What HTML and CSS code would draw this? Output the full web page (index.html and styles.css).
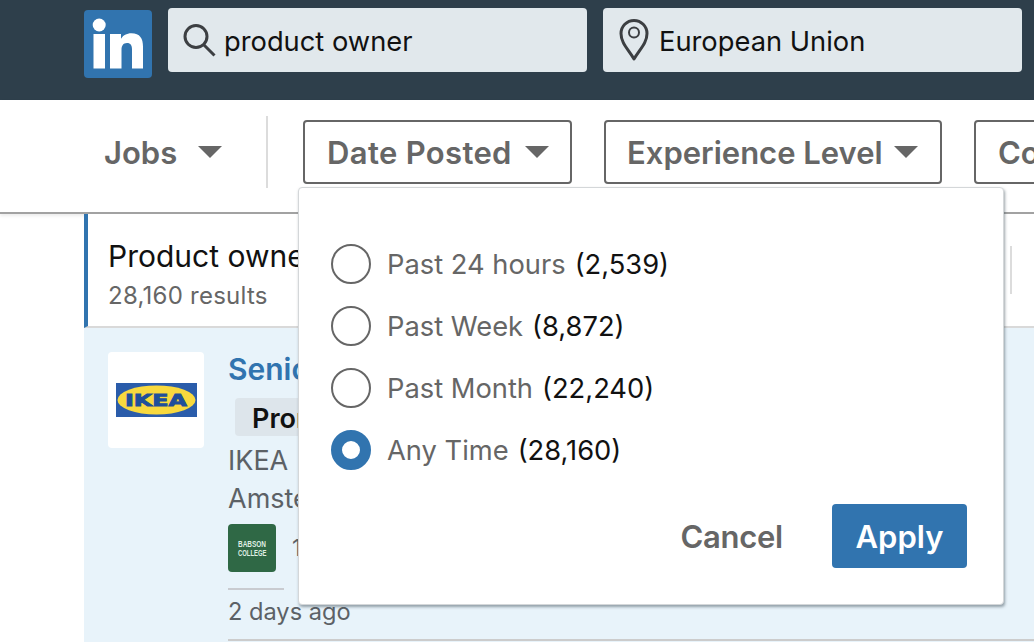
FILE: index.html
```html
<!DOCTYPE html>
<html lang="en">
<head>
<meta charset="utf-8">
<title>LinkedIn Jobs</title>
<link rel="stylesheet" href="styles.css">
</head>
<body>
<header class="topbar">
  <svg class="logo" width="68" height="68" viewBox="0 0 68 68" aria-label="LinkedIn"><rect width="68" height="68" rx="4" fill="#3174af"/><circle cx="15.200" cy="15" r="6.500" fill="#fff"/><rect x="9.500" y="24" width="11.500" height="34.500" fill="#fff"/><path d="M26 24h11v4.800c2-3.400 5.600-5.600 10.400-5.600C56 23.200 59 28.500 59 36.500V58.500H48V39.500c0-4-1.300-6.500-5-6.500-3.900 0-5.500 2.800-5.500 6.800V58.500H26z" fill="#fff"/></svg>
  <div class="field field-search">
    <svg class="field-icon" width="36" height="36" viewBox="0 0 36 36"><circle cx="15" cy="14.500" r="11" fill="none" stroke="#3c3f42" stroke-width="3"/><path d="M23 23l10.500 10.500" stroke="#3c3f42" stroke-width="3" fill="none"/></svg>
    <span class="field-text">product owner</span>
  </div>
  <div class="field field-place">
    <svg class="field-icon" width="30" height="44" viewBox="0 0 30 44"><path d="M15 41C9 31 2 25 2 15.500a13 13 0 0 1 26 0C28 25 21 31 15 41z" fill="none" stroke="#3c3f42" stroke-width="3" stroke-linejoin="round"/><circle cx="15" cy="14.500" r="5" fill="none" stroke="#3c3f42" stroke-width="2"/></svg>
    <span class="field-text">European Union</span>
  </div>
</header>
<nav class="filters">
  <div class="jobs">Jobs<span class="caret caret-jobs"></span></div>
  <div class="divider"></div>
  <div class="filter filter-date"><span class="label-date">Date Posted</span><span class="caret caret-date"></span></div>
  <div class="filter filter-exp">Experience Level<span class="caret caret-exp"></span></div>
  <div class="filter filter-co">Company<span class="caret"></span></div>
</nav>
<main class="content">
  <section class="results">
    <div class="results-head">
      <div class="results-text">
        <div class="results-title">Product owner in European Union</div>
        <div class="results-count">28,160 results</div>
      </div>
      <div class="head-divider"></div>
    </div>
    <article class="job">
      <div class="ikea-card">
        <svg width="81" height="34" viewBox="0 0 81 34" aria-label="IKEA"><rect width="81" height="34" fill="#2a5caa"/><ellipse cx="40.500" cy="17" rx="39" ry="14.500" fill="#f8d93e"/><text x="9" y="22.500" textLength="62" lengthAdjust="spacingAndGlyphs" class="ikea-text">IKEA</text></svg>
      </div>
      <div class="job-body">
        <div class="job-title">Senior Product Owner</div>
        <div class="job-tag">Promoted</div>
        <div class="job-line job-company">IKEA</div>
        <div class="job-line job-place">Amsterdam, NL</div>
        <div class="alumni">
          <svg class="babson" width="48" height="48" viewBox="0 0 48 48" aria-label="Babson College"><rect width="48" height="48" rx="4" fill="#2f6845"/><text x="10" y="23" textLength="28" lengthAdjust="spacingAndGlyphs" class="babson-text">BABSON</text><text x="10" y="32" textLength="28.500" lengthAdjust="spacingAndGlyphs" class="babson-text">COLLEGE</text></svg>
          <span class="alumni-text">1 alumni</span>
        </div>
        <div class="rule-short"></div>
        <div class="posted">2 days ago</div>
        <div class="rule-long"></div>
      </div>
    </article>
  </section>
  <div class="popover">
    <ul class="options">
      <li class="option"><span class="radio"></span><span class="opt-label">Past 24 hours</span><span class="opt-count">(2,539)</span></li>
      <li class="option"><span class="radio"></span><span class="opt-label">Past Week</span><span class="opt-count">(8,872)</span></li>
      <li class="option"><span class="radio"></span><span class="opt-label">Past Month</span><span class="opt-count">(22,240)</span></li>
      <li class="option"><span class="radio radio-on"></span><span class="opt-label">Any Time</span><span class="opt-count">(28,160)</span></li>
    </ul>
    <div class="actions">
      <button class="btn-cancel">Cancel</button>
      <button class="btn-apply">Apply</button>
    </div>
  </div>
</main>
</body>
</html>
```
FILE: styles.css
```css
* { box-sizing: border-box; }
html, body { margin: 0; height: 642px; overflow: hidden; }
body { font-family: Inter, "Liberation Sans", sans-serif; background: #fff; color: #111; width: 1034px; }
.topbar { height: 100px; background: #2e3f4b; display: flex; align-items: flex-start; padding: 8px 0 0 84px; }
.logo { margin-top: 2px; margin-right: 16px; flex: none; }
.field { width: 419px; height: 64px; background: #e1e8ec; border-radius: 4px; display: flex; align-items: center; font-size: 27.3px; color: #111; flex: none; }
.field-text { padding-top: 2px; }
.field-search { padding-left: 13px; margin-right: 16px; }
.field-search .field-icon { margin-right: 7px; }
.field-place { padding-left: 16px; }
.field-place .field-icon { margin-right: 10px; }
.filters { height: 114px; border-bottom: 2px solid #a2a2a2; box-shadow: 0 2px 3px rgba(0,0,0,.08); display: flex; align-items: center; padding: 0 0 8px 104px; overflow: hidden; position: relative; background: #fff; }
.jobs { font-size: 31px; font-weight: 600; color: #666; display: flex; align-items: center; width: 162px; flex: none; }
.caret { display: inline-block; width: 0; height: 0; border-left: 12px solid transparent; border-right: 12px solid transparent; border-top: 12px solid #666; margin-left: 14px; flex: none; }
.caret-jobs { margin-left: 21px; }
.caret-date { margin-left: 13px; }
.caret-exp { margin-left: 11px; }
.divider { width: 2px; height: 72px; background: #dcdcdc; flex: none; margin-right: 35px; }
.filter { height: 64px; border: 2px solid #666; border-radius: 4px; font-size: 31px; font-weight: 600; color: #666; display: flex; align-items: center; padding-left: 22px; flex: none; white-space: nowrap; }
.label-date { letter-spacing: .35px; }
.filter-date { width: 269px; margin-right: 32px; }
.filter-exp { width: 338px; margin-right: 32px; padding-left: 21px; }
.filter-co { width: 200px; }
.content { position: relative; height: 428px; }
.results { margin-left: 84px; height: 428px; background: #e8f3fa; overflow: hidden; }
.results-head { height: 114px; background: #fff; border-left: 4px solid #3174af; border-bottom: 2px solid #d9d9d9; padding: 0 22px 0 20px; white-space: nowrap; display: flex; align-items: center; }
.results-text { flex: 1; align-self: flex-start; padding-top: 23px; overflow: hidden; }
.head-divider { width: 2px; height: 48px; background: #dcdcdc; flex: none; }
.results-title { font-size: 30px; line-height: 38px; color: #111; }
.results-count { font-size: 24px; letter-spacing: .25px; line-height: 34px; color: #666; margin-top: 4px; }
.job { display: flex; padding: 24px 0 0 24px; }
.ikea-card { width: 96px; height: 96px; background: #fff; border-radius: 4px; display: flex; align-items: center; justify-content: center; flex: none; margin-right: 24px; }
.ikea-text { font-family: "DejaVu Sans", sans-serif; font-size: 15px; font-weight: 700; fill: #1f4f9a; stroke: #1f4f9a; stroke-width: .8px; }
.job-body { flex: 1; white-space: nowrap; }
.job-title { font-size: 30px; font-weight: 600; line-height: 36px; color: #3174af; margin-top: -1px; }
.job-tag { margin: 11px 0 0 7px; width: 200px; height: 38px; border-radius: 4px; background: #dde5eb; font-size: 27px; font-weight: 600; line-height: 41px; padding-left: 17px; color: #111; }
.job-line { font-size: 27px; line-height: 38px; color: #5c6166; }
.job-company { margin-top: 6px; }
.alumni { display: flex; align-items: center; margin-top: 6px; height: 48px; }
.babson { flex: none; }
.babson-text { font-family: "Liberation Sans", sans-serif; font-size: 9px; font-weight: 700; fill: #dfeee3; }
.alumni-text { margin-left: 16px; font-size: 23px; color: #5c6166; }
.rule-short { width: 56px; height: 2px; background: #c9cbd0; margin-top: 16px; }
.posted { font-size: 23.600px; line-height: 32px; color: #5c6166; margin-top: 6px; }
.rule-long { height: 2px; background: #ccc; margin-top: 11px; }
.popover { position: absolute; left: 298px; top: -27px; width: 706px; height: 418px; background: #fff; border: 1px solid #d4d7d9; border-radius: 4px; box-shadow: 1px 2px 3px rgba(60,75,85,.5); padding: 0 36px 0 32px; }
.options { list-style: none; margin: 0; padding: 45px 0 0; }
.option { display: flex; align-items: center; height: 62px; font-size: 27.3px; }
.radio { width: 40px; height: 40px; border-radius: 50%; border: 2px solid #666; background: #fff; flex: none; margin-right: 16px; }
.radio-on { border: 11px solid #3174af; }
.opt-label { color: #666; margin-right: 9px; }
.opt-count { color: #111; }
.actions { display: flex; justify-content: flex-end; align-items: center; margin-top: 23px; }
.btn-cancel { background: none; border: 0; font: 600 31px Inter, sans-serif; letter-spacing: -.25px; color: #666; padding: 0; margin-right: 49px; }
.btn-apply { width: 135px; height: 64px; background: #3174af; border: 0; border-radius: 4px; color: #fff; font: 600 31px Inter, sans-serif; padding: 0; }
```
